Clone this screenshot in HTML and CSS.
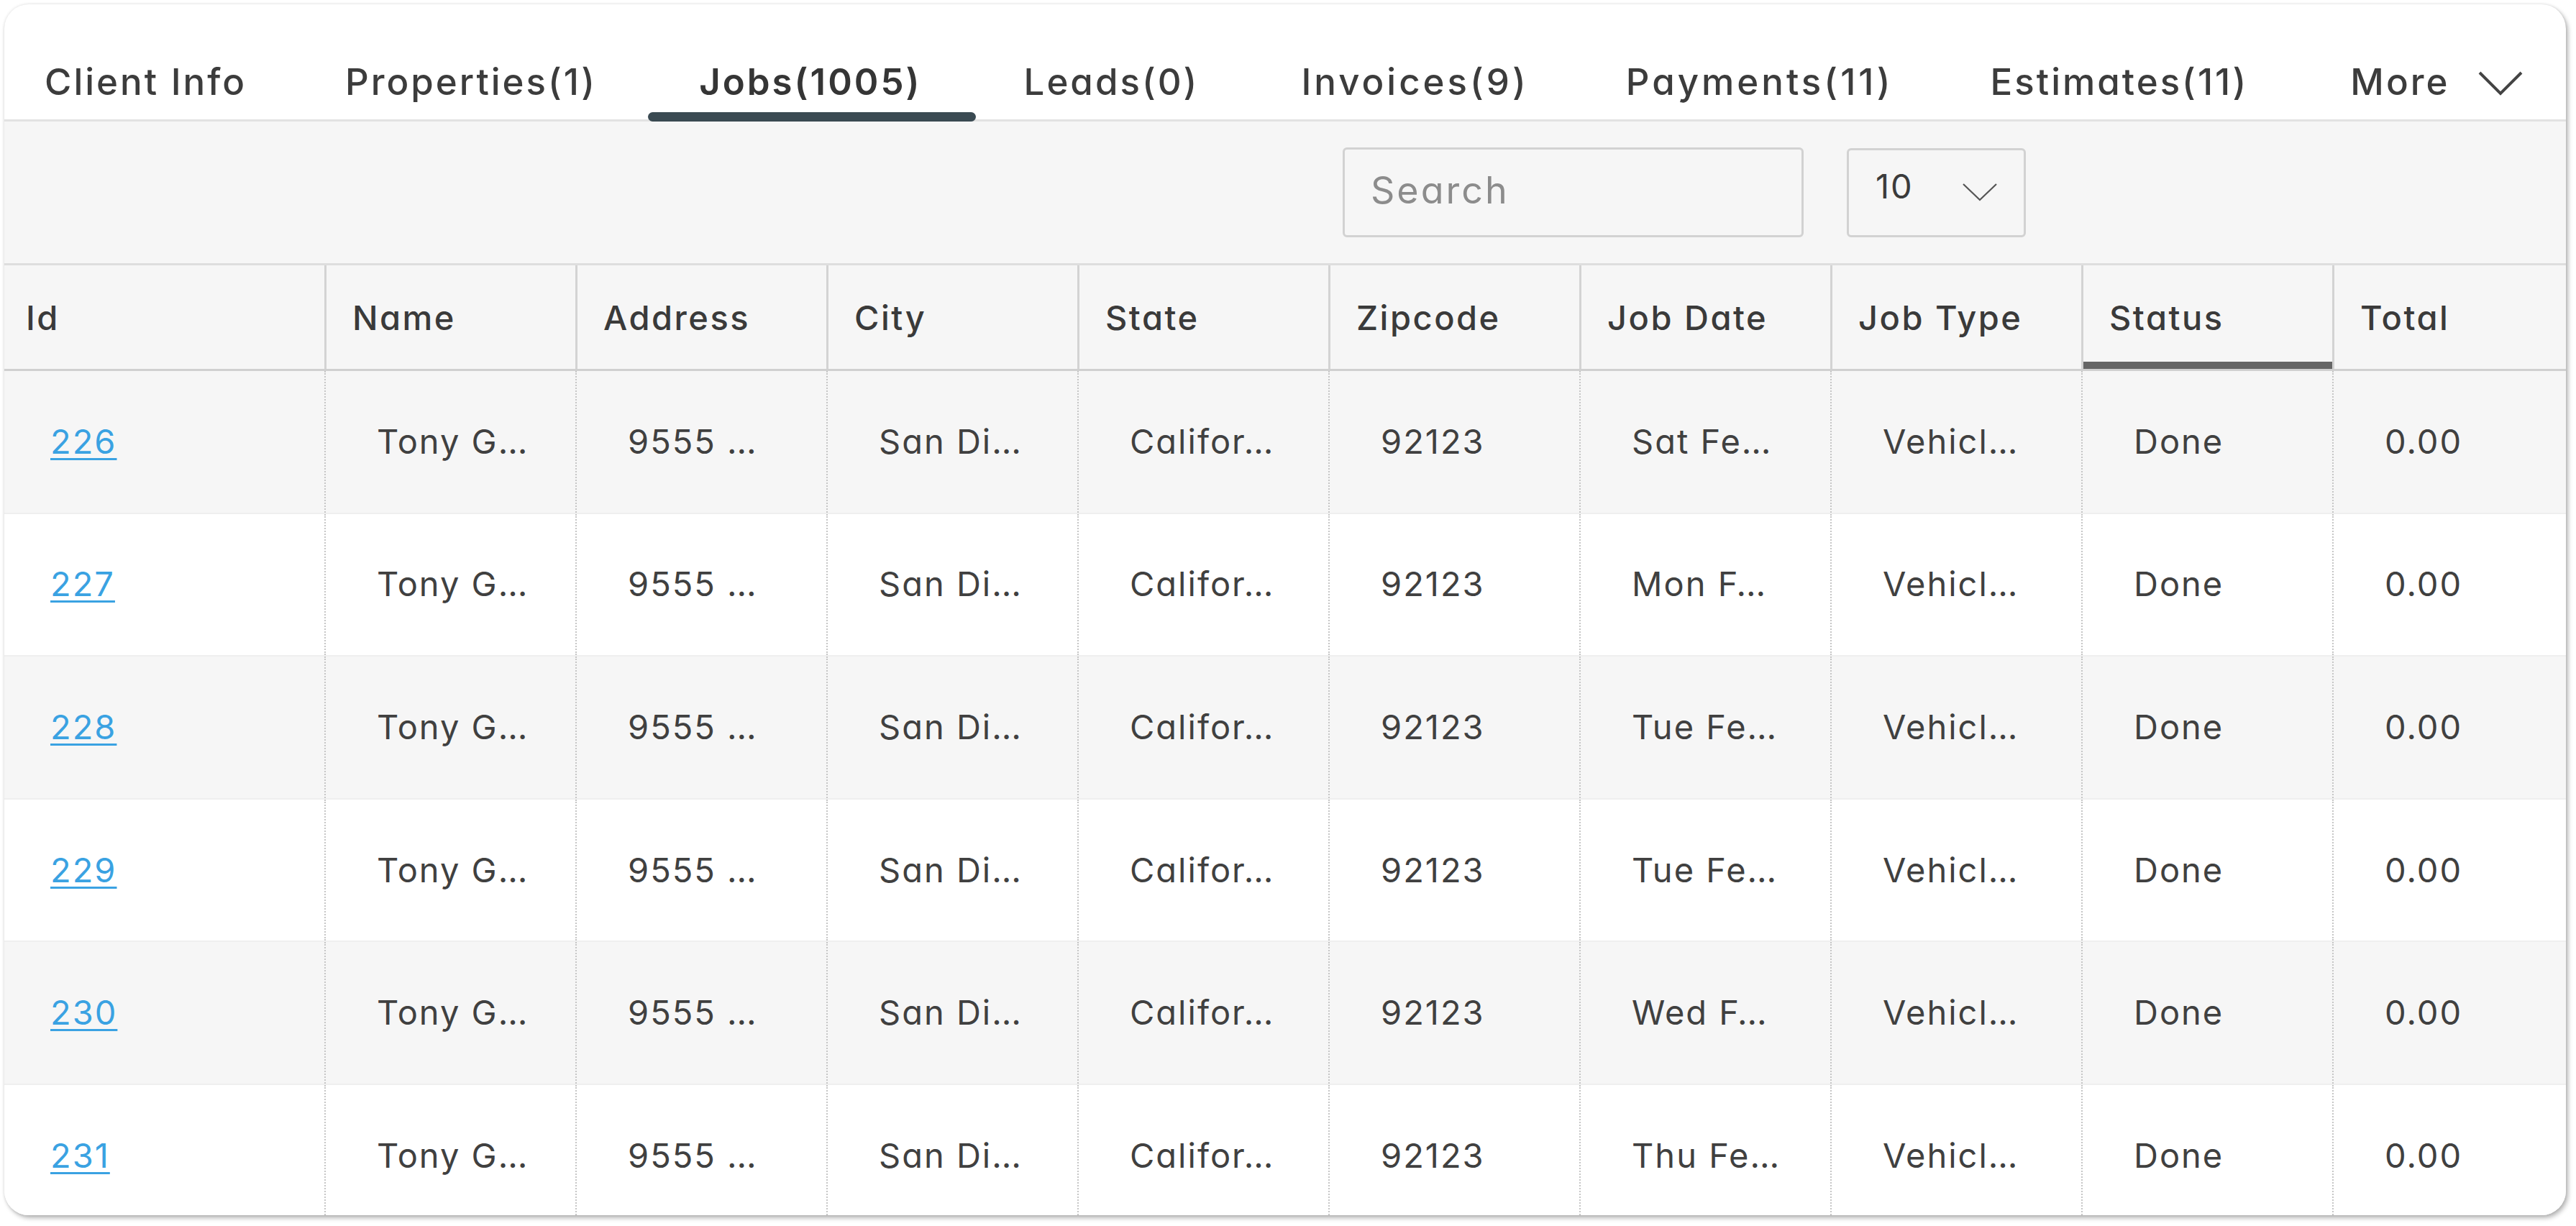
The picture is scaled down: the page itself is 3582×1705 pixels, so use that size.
FILE: index.html
```html
<!DOCTYPE html>
<html lang="en">
<head>
<meta charset="utf-8">
<title>Jobs</title>
<link rel="stylesheet" href="styles.css">
</head>
<body>
<div class="card">
  <nav class="tabs">
    <div class="tab first">Client Info</div>
    <div class="tab">Properties(1)</div>
    <div class="tab active">Jobs(1005)</div>
    <div class="tab">Leads(0)</div>
    <div class="tab wide">Invoices(9)</div>
    <div class="tab wide">Payments(11)</div>
    <div class="tab">Estimates(11)</div>
    <div class="tab more">More
      <svg class="more-chev" width="62" height="34" viewBox="0 0 62 34"><polyline points="2,2 31,31 60,2" fill="none" stroke="#444" stroke-width="4"/></svg>
    </div>
  </nav>

  <div class="toolbar">
    <input class="search" type="text" placeholder="Search">
    <div class="select">
      <span class="select-val">10</span>
      <svg width="48" height="25" viewBox="0 0 48 25"><polyline points="1,1 24,23 47,1" fill="none" stroke="#555" stroke-width="2.2"/></svg>
    </div>
  </div>

  <div class="table">
    <div class="row head">
      <div class="cell">Id</div>
      <div class="cell">Name</div>
      <div class="cell">Address</div>
      <div class="cell">City</div>
      <div class="cell">State</div>
      <div class="cell">Zipcode</div>
      <div class="cell">Job Date</div>
      <div class="cell">Job Type</div>
      <div class="cell sorted">Status</div>
      <div class="cell">Total</div>
    </div>

    <div class="row odd">
      <div class="cell"><a class="link" href="#">226</a></div>
      <div class="cell">Tony G…</div>
      <div class="cell">9555 …</div>
      <div class="cell">San Di…</div>
      <div class="cell">Califor…</div>
      <div class="cell">92123</div>
      <div class="cell">Sat Fe…</div>
      <div class="cell">Vehicl…</div>
      <div class="cell">Done</div>
      <div class="cell">0.00</div>
    </div>
    <div class="row">
      <div class="cell"><a class="link" href="#">227</a></div>
      <div class="cell">Tony G…</div>
      <div class="cell">9555 …</div>
      <div class="cell">San Di…</div>
      <div class="cell">Califor…</div>
      <div class="cell">92123</div>
      <div class="cell">Mon F…</div>
      <div class="cell">Vehicl…</div>
      <div class="cell">Done</div>
      <div class="cell">0.00</div>
    </div>
    <div class="row odd">
      <div class="cell"><a class="link" href="#">228</a></div>
      <div class="cell">Tony G…</div>
      <div class="cell">9555 …</div>
      <div class="cell">San Di…</div>
      <div class="cell">Califor…</div>
      <div class="cell">92123</div>
      <div class="cell">Tue Fe…</div>
      <div class="cell">Vehicl…</div>
      <div class="cell">Done</div>
      <div class="cell">0.00</div>
    </div>
    <div class="row">
      <div class="cell"><a class="link" href="#">229</a></div>
      <div class="cell">Tony G…</div>
      <div class="cell">9555 …</div>
      <div class="cell">San Di…</div>
      <div class="cell">Califor…</div>
      <div class="cell">92123</div>
      <div class="cell">Tue Fe…</div>
      <div class="cell">Vehicl…</div>
      <div class="cell">Done</div>
      <div class="cell">0.00</div>
    </div>
    <div class="row odd">
      <div class="cell"><a class="link" href="#">230</a></div>
      <div class="cell">Tony G…</div>
      <div class="cell">9555 …</div>
      <div class="cell">San Di…</div>
      <div class="cell">Califor…</div>
      <div class="cell">92123</div>
      <div class="cell">Wed F…</div>
      <div class="cell">Vehicl…</div>
      <div class="cell">Done</div>
      <div class="cell">0.00</div>
    </div>
    <div class="row">
      <div class="cell"><a class="link" href="#">231</a></div>
      <div class="cell">Tony G…</div>
      <div class="cell">9555 …</div>
      <div class="cell">San Di…</div>
      <div class="cell">Califor…</div>
      <div class="cell">92123</div>
      <div class="cell">Thu Fe…</div>
      <div class="cell">Vehicl…</div>
      <div class="cell">Done</div>
      <div class="cell">0.00</div>
    </div>
  </div>
</div>
</body>
</html>
```

FILE: styles.css
```css
* { box-sizing: border-box; }

html, body {
  margin: 0;
  padding: 0;
  background: #ffffff;
}

body {
  padding: 6px 14px 15px 6px;
  font-family: Inter, "Open Sans", sans-serif;
  font-feature-settings: "cv11" 1;
  color: #3b3b3b;
}

.card {
  width: 3562px;
  height: 1684px;
  background: #ffffff;
  border-radius: 34px;
  overflow: hidden;
  box-shadow: 0 0 4px rgba(0, 0, 0, 0.12), 3px 4px 6px rgba(0, 0, 0, 0.28);
  display: flex;
  flex-direction: column;
}

/* ---------- tabs ---------- */
.tabs {
  display: flex;
  align-items: flex-end;
  height: 163px;
  flex: none;
  border-bottom: 3px solid #e2e2e2;
}

.tab {
  position: relative;
  padding: 0 71px 21px 71px;
  font-size: 51px;
  line-height: 62px;
  font-weight: 500;
  letter-spacing: 3px;
  color: #3c3c3c;
  white-space: nowrap;
}

.tab.first {
  padding-left: 56px;
  padding-right: 66px;
}

.tab.wide {
  letter-spacing: 4px;
  padding-right: 64px;
}

.tab.active {
  font-weight: 600;
  color: #353535;
}

.tab.active::after {
  content: "";
  position: absolute;
  left: 0;
  right: -4px;
  bottom: -3px;
  height: 13px;
  border-radius: 7px;
  background: #3a4a52;
}

.tab.more {
  display: flex;
  align-items: center;
  gap: 40px;
}

.more-chev { margin-top: 4px; }

/* ---------- toolbar ---------- */
.toolbar {
  display: flex;
  align-items: center;
  gap: 60px;
  height: 200px;
  flex: none;
  padding-left: 1861px;
  background: #f6f6f6;
  border-bottom: 3px solid #dedede;
}

.search {
  width: 641px;
  height: 125px;
  border: 3px solid #d2d2d2;
  border-radius: 6px;
  background: #f6f6f6;
  padding: 0 0 6px 36px;
  font-family: Inter, "Open Sans", sans-serif;
  font-feature-settings: "cv11" 1;
  font-size: 52px;
  letter-spacing: 3px;
  color: #444;
  outline: none;
}

.search::placeholder { color: #8c8c8c; }

.select {
  width: 249px;
  height: 124px;
  border: 3px solid #d2d2d2;
  border-radius: 6px;
  display: flex;
  align-items: center;
  padding-left: 37px;
  gap: 68px;
}

.select-val {
  font-size: 47px;
  letter-spacing: 2px;
  color: #3b3b3b;
  margin-top: -18px;
}

/* ---------- table ---------- */
.table {
  display: flex;
  flex-direction: column;
}

.row {
  display: grid;
  grid-template-columns: 445px repeat(8, 349px) 1fr;
  height: 198.6px;
  flex: none;
  background: #ffffff;
  border-bottom: 2px solid #efefef;
}

.row.odd { background: #f6f6f6; }

.cell {
  display: flex;
  align-items: center;
  padding-left: 71px;
  padding-bottom: 2px;
  font-size: 47px;
  letter-spacing: 2px;
  color: #404040;
  white-space: nowrap;
  overflow: hidden;
  border-left: 2px dotted #c6c6c6;
}

.cell:first-child {
  border-left: none;
  padding-left: 64px;
}

.row.head {
  height: 147px;
  background: #f6f6f6;
  border-bottom: 3px solid #d0d0d0;
}

.row.head .cell {
  position: relative;
  padding-left: 36px;
  padding-bottom: 0;
  font-weight: 500;
  letter-spacing: 2.5px;
  color: #3a3a3a;
  border-left: 3px solid #d3d3d3;
}

.row.head .cell:first-child {
  border-left: none;
  padding-left: 30px;
}

.row.head .cell.sorted::after {
  content: "";
  position: absolute;
  left: 0;
  right: 0;
  bottom: 0;
  height: 10px;
  background: #666666;
}

.link {
  color: #3aa2e2;
  text-decoration: underline;
  text-decoration-thickness: 3px;
  text-underline-offset: 6px;
}
```
